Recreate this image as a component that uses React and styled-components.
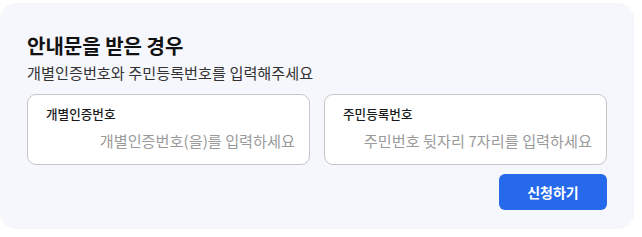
import React from 'react'
import styled, { createGlobalStyle } from 'styled-components'

const GlobalStyle = createGlobalStyle`
    body {
        margin: 0;
        background: #ffffff;
        font-family: "Noto Sans CJK KR", "Noto Sans", sans-serif;
    }
`

const Card = styled.section`
    margin-top: 3px;
    width: 634px;
    height: 226px;
    box-sizing: border-box;
    padding: 29px 27px 18px 27px;
    background: #f6f7fc;
    border-radius: 16px;
    display: flex;
    flex-direction: column;
`

const Title = styled.h2`
    margin: 0;
    font-size: 20px;
    line-height: 28px;
    font-weight: 700;
    color: #111111;
`

const Subtitle = styled.p`
    margin: 2px 0 0 0;
    font-size: 15.2px;
    line-height: 20px;
    color: #333333;
`

const Fields = styled.div`
    margin-top: 12px;
    display: grid;
    grid-template-columns: 1fr 1fr;
    gap: 14px;
`

const Field = styled.label`
    display: flex;
    flex-direction: column;
    gap: 8px;
    padding: 11px 14px 14px 18px;
    background: #ffffff;
    border: 1px solid #c6c6c8;
    border-radius: 9px;
`

const FieldLabel = styled.span`
    font-size: 12.6px;
    line-height: 16px;
    font-weight: 500;
    color: #1a1a1a;
`

const Input = styled.input`
    border: none;
    outline: none;
    padding: 0;
    background: transparent;
    text-align: right;
    font-family: inherit;
    font-size: 15.2px;
    line-height: 20px;
    height: 20px;
    color: #222222;
    &::placeholder {
        color: #9a9a9a;
    }
`

const Footer = styled.div`
    margin-top: 9px;
    display: flex;
    justify-content: flex-end;
`

const Button = styled.button`
    width: 108px;
    height: 36px;
    border: none;
    border-radius: 6px;
    background: #2669ea;
    color: #ffffff;
    font-family: inherit;
    font-size: 14px;
    font-weight: 700;
    cursor: pointer;
`

export default function App() {
    return (
        <>
            <GlobalStyle />
            <Card>
                <Title>안내문을 받은 경우</Title>
                <Subtitle>개별인증번호와 주민등록번호를 입력해주세요</Subtitle>
                <Fields>
                    <Field>
                        <FieldLabel>개별인증번호</FieldLabel>
                        <Input type="text" placeholder="개별인증번호(을)를 입력하세요" />
                    </Field>
                    <Field>
                        <FieldLabel>주민등록번호</FieldLabel>
                        <Input type="password" placeholder="주민번호 뒷자리 7자리를 입력하세요" />
                    </Field>
                </Fields>
                <Footer>
                    <Button>신청하기</Button>
                </Footer>
            </Card>
        </>
    )
}
